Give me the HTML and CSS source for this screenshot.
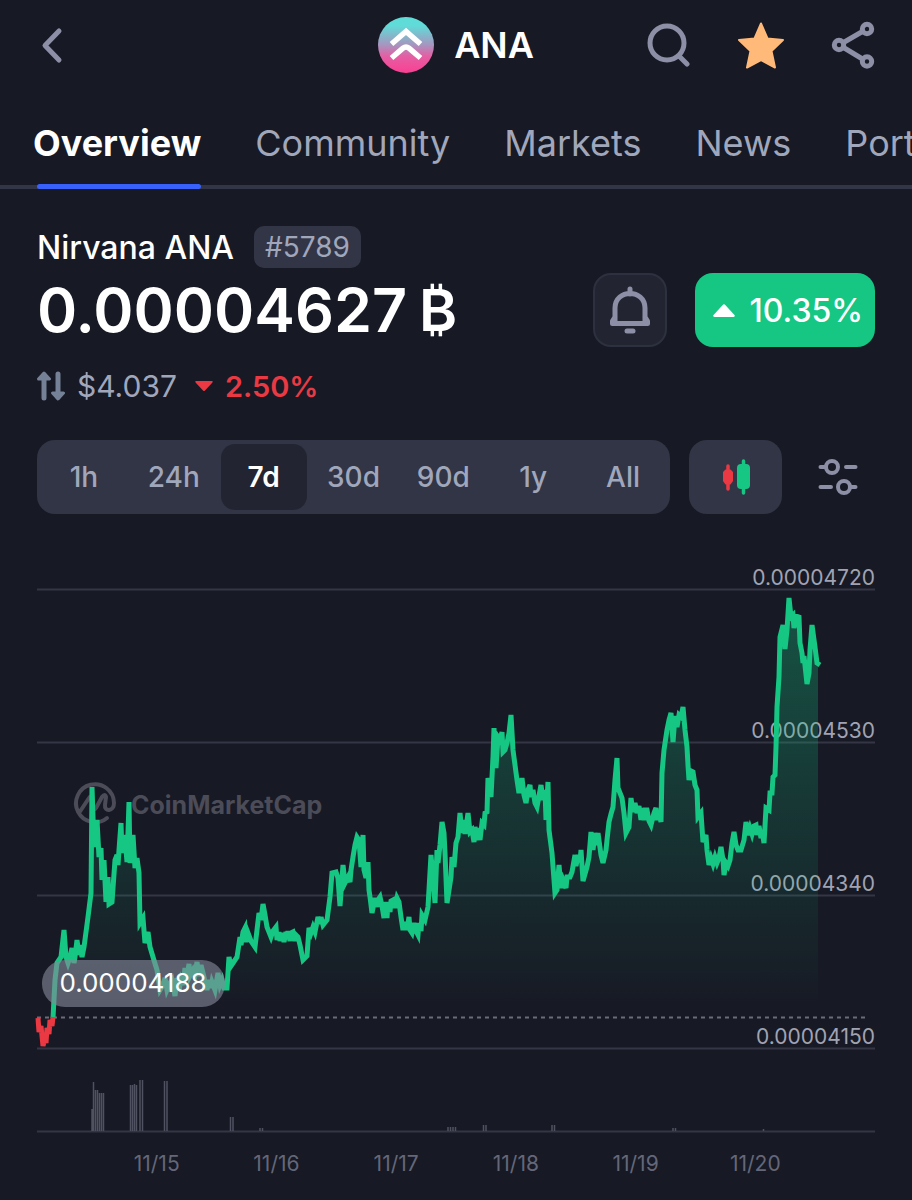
FILE: index.html
```html
<!DOCTYPE html>
<html lang="en">
<head>
    <meta charset="UTF-8">
    <meta name="viewport" content="width=device-width, initial-scale=1.0">
    <title>Nirvana ANA</title>
    <link rel="stylesheet" href="styles.css">
</head>
<body>
    <header class="topbar">
        <button class="icon-btn back" aria-label="Back">
            <svg width="44" height="44" viewBox="0 0 44 44"><path d="M22 8L8 22.500L22 37"/></svg>
        </button>
        <div class="coin">
            <svg width="56" height="56" viewBox="0 0 56 56">
                <defs>
                    <linearGradient id="logoFill" x1="0" y1="0" x2="0" y2="1">
                        <stop offset="0.15" stop-color="#5fdcd8"/>
                        <stop offset="0.5" stop-color="#a795bf"/>
                        <stop offset="0.7" stop-color="#e45fa4"/>
                        <stop offset="1" stop-color="#fb3f92"/>
                    </linearGradient>
                </defs>
                <circle cx="28" cy="28" r="28" fill="url(#logoFill)"/>
                <path d="M13.500 27L28 14.500L42.500 27M13.500 41L25 31.200Q28 28.800 31 31.200L42.500 41" fill="none" stroke="#fff" stroke-width="5.500"/>
            </svg>
            <h1>ANA</h1>
        </div>
        <div class="actions">
            <button class="icon-btn" aria-label="Search">
                <svg width="44" height="44" viewBox="0 0 44 44"><circle cx="20" cy="20" r="17"/><path d="M32 33L40 41"/></svg>
            </button>
            <button class="icon-btn star" aria-label="Watchlist">
                <svg width="48" height="48" viewBox="0 0 48 48"><path d="M24 2.500L30.500 17.500L46 19L34.500 30L38 46.500L24 39L10 46.500L13.500 30L2 19L17.500 17.500Z"/></svg>
            </button>
            <button class="icon-btn" aria-label="Share">
                <svg width="44" height="48" viewBox="0 0 44 48"><circle cx="36" cy="8" r="4.700"/><circle cx="8" cy="24" r="4.700"/><circle cx="36" cy="40.500" r="4.700"/><path d="M12.500 21.500L31.500 10.500M12.500 26.500L31.500 38"/></svg>
            </button>
        </div>
    </header>

    <nav class="tabs">
        <a href="#overview" class="active">Overview</a>
        <a href="#community">Community</a>
        <a href="#markets">Markets</a>
        <a href="#news">News</a>
        <a href="#portfolio">Portfolio</a>
    </nav>

    <main>
        <section class="summary">
            <div>
                <div class="name-row">
                    <h2>Nirvana ANA</h2>
                    <span class="rank">#5789</span>
                </div>
                <div class="price">0.00004627<span class="unit">₿</span></div>
            </div>
            <div class="summary-actions">
                <button class="bell" aria-label="Price alert">
                    <svg width="44" height="48" viewBox="0 0 44 48"><path d="M22 3V8M7 35V22C7 2.500 37 2.500 37 22V35M7 31L4.500 35V37.500H39.500V35L37 31"/><path d="M19 45H25"/></svg>
                </button>
                <div class="change">
                    <svg width="22" height="13" viewBox="0 0 22 13"><path d="M1.500 13Q-1 12.500 1 10.500L9.500 1.200Q11 -.5 12.500 1.200L21 10.500Q23 12.500 20.500 13Z"/></svg>
                    <span>10.35%</span>
                </div>
            </div>
        </section>

        <div class="sub-price">
            <svg width="28" height="30" viewBox="0 0 28 30">
                <path d="M7 27V4M21 3V26" fill="none" stroke="#758196" stroke-width="5" stroke-linecap="round"/>
                <path d="M1.500 8L7 2L12.500 8ZM15.500 22L21 28L26.500 22Z" fill="#758196" stroke="#758196" stroke-width="3" stroke-linejoin="round"/>
            </svg>
            <span class="usd">$4.037</span>
            <svg class="down" width="18" height="10" viewBox="0 0 18 10"><path d="M1 0H17Q18.500 .5 17 2L10 9.500Q9 10.500 8 9.500L1 2Q-.5 .5 1 0Z" fill="#ea3943"/></svg>
            <span class="loss">2.50%</span>
        </div>

        <div class="controls">
            <div class="ranges">
                <button>1h</button>
                <button>24h</button>
                <button class="active">7d</button>
                <button>30d</button>
                <button>90d</button>
                <button>1y</button>
                <button>All</button>
            </div>
            <button class="candles" aria-label="Candlestick chart">
                <svg width="28" height="36" viewBox="0 0 28 36">
                    <path d="M6 7V30" stroke="#ea3943" stroke-width="3.500" stroke-linecap="round"/>
                    <path d="M3.500 10.500H8.500L11 13V22L8.500 25.500H3.500L1 22V13Z" fill="#ea3943"/>
                    <path d="M21.500 2V34" stroke="#16c784" stroke-width="3.500" stroke-linecap="round"/>
                    <rect x="15" y="5" width="13" height="25" rx="4" fill="#16c784"/>
                </svg>
            </button>
            <button class="settings" aria-label="Chart settings">
                <svg width="40" height="36" viewBox="0 0 40 36"><circle cx="14" cy="8" r="6"/><circle cx="26" cy="28" r="6"/><path d="M2.500 8H7M28 8H37.500M2.500 28H13M33 28H37.500"/></svg>
            </button>
        </div>

        <svg class="chart" viewBox="37 560 838 576" role="img" aria-label="ANA price, 7 days">
            <defs>
                <linearGradient id="areaFill" gradientUnits="userSpaceOnUse" x1="0" y1="598" x2="0" y2="1010">
                    <stop offset="0" stop-color="#16c784" stop-opacity="0.34"/>
                    <stop offset="1" stop-color="#16c784" stop-opacity="0"/>
                </linearGradient>
            </defs>

            <!-- watermark -->
            <path class="watermark-logo" d="M107 818A19 19 0 1 1 114 803C114 812 104 812 105 805L106 797Q105 793 102 797L96 808Q94 811 93 807L92 798Q91 795 89 798L79 813"/>
            <text class="watermark" x="131" y="814">CoinMarketCap</text>

            <path class="grid-line" d="M37 589.500H875M37 742.500H875M37 895.500H875M37 1048.500H875M37 1131.500H875"/>
            <path class="base-line" d="M37 1017.500H869"/>

            <g class="axis">
                <text x="875" y="585">0.00004720</text>
                <text x="875" y="738">0.00004530</text>
                <text x="875" y="891">0.00004340</text>
                <text x="875" y="1044">0.00004150</text>
            </g>

            <path id="area" fill="url(#areaFill)"/>
            <path id="line" class="line up" d="M53 1018L55 980L57 963L61 957L64 930L66 957L68 963L70 957L72 948L74 963L75 957L77 940L79 955L80 945L82 957L84 947L88 917L91 893L92 787L94 847L97 820L99 857L101 848L102 880L104 860L106 902L108 877L109 904L112 902L115 860L117 855L118 865L119 850L121 823L122 853L124 835L126 850L127 862L129 802L130 863L133 835L135 868L137 858L139 873L140 923L143 918L145 943L148 932L150 947L153 957L157 970L160 990L163 985L165 978L167 990L170 983L172 980L175 996L177 978L179 990L181 980L183 985L185 968L187 977L189 964L190 976L193 970L195 975L197 962L199 976L201 965L203 973L207 990L209 980L211 988L212 982L215 990L218 973L220 985L222 980L224 988L227 988L229 957L231 966L233 963L237 957L240 937L241 945L243 932L245 928L246 942L248 933L251 941L255 947L259 913L261 920L263 904L265 915L267 927L271 937L273 931L276 927L277 940L279 932L280 941L282 933L284 942L286 932L287 939L288 931L290 941L291 933L293 932L295 941L296 935L298 937L300 945L303 960L307 956L309 928L311 933L313 927L315 932L316 927L318 917L320 924L321 917L323 925L327 920L330 897L332 873L336 872L338 878L340 906L343 865L345 883L348 877L350 882L351 870L353 857L355 845L357 837L359 840L361 867L363 835L364 870L366 878L368 862L369 890L370 897L372 913L375 898L377 907L378 900L380 897L382 906L384 918L385 902L387 918L388 902L390 912L391 901L393 900L395 908L397 898L399 902L401 917L403 930L405 922L407 930L409 917L410 930L412 933L414 923L416 931L418 935L419 923L421 931L422 915L425 920L428 907L431 855L435 903L437 850L438 863L440 845L442 822L444 833L445 853L447 903L449 890L451 877L452 857L454 867L456 843L458 837L460 813L462 833L463 820L465 834L468 813L470 832L472 830L474 842L475 827L477 840L478 828L480 840L482 823L484 825L485 813L487 812L488 778L491 797L493 757L494 728L496 768L498 737L500 740L502 732L503 752L505 750L507 743L509 733L511 715L513 750L517 780L519 793L521 785L522 778L524 795L526 803L528 790L530 785L531 797L533 790L535 803L537 807L539 796L541 785L543 800L545 790L546 820L548 782L549 830L552 853L555 893L557 890L559 865L561 888L563 880L566 888L567 877L570 877L572 872L575 855L576 866L578 855L580 862L581 850L583 881L587 867L589 857L591 832L593 850L595 833L597 845L598 833L601 855L603 863L606 850L607 840L609 822L611 814L613 807L615 780L617 758L618 788L620 793L622 798L624 813L626 833L629 827L631 798L633 812L635 803L637 813L639 806L641 820L642 808L644 820L645 810L647 810L649 821L651 825L654 813L656 808L657 820L659 812L661 822L662 773L664 750L667 730L669 720L671 713L673 742L675 716L677 727L679 715L681 717L683 707L685 730L687 747L688 765L689 780L691 771L693 772L695 785L697 790L698 817L701 813L703 842L706 835L707 850L709 865L711 858L713 864L715 857L717 863L719 858L721 847L723 860L724 875L726 863L728 866L730 860L732 843L734 832L736 845L738 850L741 850L744 840L746 822L748 835L750 828L752 834L754 826L756 825L757 835L759 826L761 838L762 830L764 843L766 808L769 810L770 793L772 793L773 777L775 775L776 747L777 707L779 677L780 637L783 625L785 649L787 630L789 598L791 617L793 615L794 628L796 616L799 617L800 643L802 653L803 663L804 656L807 684L809 673L810 650L812 625L815 647L817 663L820 665"/>
            <path class="line loss-line" d="M38 1018L39 1032L41 1026L43 1046L45 1038L46 1043L47 1028L49 1034L50 1020L52 1026L53 1017"/>

            <rect x="42" y="960" width="183" height="47" rx="23" fill="#858799" fill-opacity="0.62"/>
            <text class="open-price" x="133" y="992">0.00004188</text>

            <!-- volume -->
            <path class="volume" d="M92 1131V1109M93.500 1131V1082M95.500 1131V1090M97.500 1131V1090M99.500 1131V1093M101.500 1131V1093M103.500 1131V1093M130.500 1131V1085M132.500 1131V1085M134.500 1131V1084M136.500 1131V1085M140 1131V1080M142.500 1131V1080M164.500 1131V1081M167 1131V1081M230.500 1131V1117M233 1131V1117M260 1131V1128M262.500 1131V1128M448 1131V1127M450.500 1131V1127M453 1131V1127M455.500 1131V1127M483.500 1131V1125M486 1131V1125M552 1131V1125M554.500 1131V1125M673 1131V1128M675.500 1131V1128M763.500 1131V1129"/>
        </svg>

        <div class="dates">
            <span>11/15</span>
            <span>11/16</span>
            <span>11/17</span>
            <span>11/18</span>
            <span>11/19</span>
            <span>11/20</span>
        </div>
    </main>

    <script>
        // the shaded area follows the price line down to the opening price
        const line = document.getElementById('line').getAttribute('d');
        document.getElementById('area').setAttribute('d', line.replace(/L820 665$/, 'L818 665') + 'V1010H53Z');
    </script>
</body>
</html>
```
FILE: styles.css
```css
* {
    box-sizing: border-box;
}

body {
    margin: 0;
    min-height: 100vh;
    background-color: #171924;
    color: #ffffff;
    font-family: Inter, "Liberation Sans", sans-serif;
}

h1, h2 {
    margin: 0;
}

button {
    padding: 0;
    border: none;
    background: none;
    color: inherit;
    font-family: inherit;
    cursor: pointer;
}

svg {
    display: block;
}

/* header */
.topbar {
    display: grid;
    grid-template-columns: 1fr auto 1fr;
    align-items: center;
    height: 90px;
    padding: 0 37px;
}

.icon-btn {
    display: flex;
    justify-content: center;
    align-items: center;
    width: 44px;
    height: 48px;
}

.icon-btn svg,
.bell svg,
.settings svg {
    flex-shrink: 0;
    fill: none;
    stroke: #8c8fa6;
    stroke-width: 5;
    stroke-linecap: round;
    stroke-linejoin: round;
}

.star svg {
    fill: #ffb978;
    stroke: #ffb978;
    stroke-width: 2;
}

.coin {
    display: flex;
    align-items: center;
    gap: 20px;
}

.coin h1 {
    font-size: 36px;
    font-weight: 600;
}

.actions {
    display: flex;
    justify-content: flex-end;
    gap: 48px;
}

/* tabs */
.tabs {
    display: flex;
    gap: 54px;
    height: 99px;
    padding: 0 33px;
    box-shadow: inset 0 -4px #323546;
    white-space: nowrap;
    overflow: hidden;
}

.tabs a {
    display: flex;
    align-items: center;
    height: 99px;
    padding-top: 7px;
    color: #a1a7bb;
    font-size: 36px;
    text-decoration: none;
}

.tabs .active {
    position: relative;
    color: #ffffff;
    font-weight: 700;
}

.tabs .active::after {
    content: "";
    position: absolute;
    left: 4px;
    right: 0;
    bottom: 0;
    height: 5px;
    border-radius: 3px;
    background-color: #3861fb;
}

/* coin summary */
main {
    padding: 36px 37px 0;
}

.summary {
    display: flex;
    justify-content: space-between;
    align-items: flex-end;
}

.name-row {
    display: flex;
    align-items: center;
    gap: 20px;
    height: 44px;
}

.name-row h2 {
    font-size: 32px;
    font-weight: 500;
}

.rank {
    padding: 0 11px;
    border-radius: 10px;
    background-color: #323546;
    color: #a1a7bb;
    font-size: 28px;
    line-height: 42px;
}

.price {
    display: flex;
    align-items: center;
    gap: 12px;
    height: 82px;
    font-size: 61px;
    font-weight: 600;
}

.unit {
    font-size: 58px;
}

.summary-actions {
    display: flex;
    gap: 28px;
    padding-bottom: 4px;
}

.bell {
    display: flex;
    justify-content: center;
    align-items: center;
    width: 74px;
    height: 74px;
    border: 2px solid #2d303f;
    border-radius: 18px;
    background-color: #222531;
}

.change {
    display: flex;
    justify-content: flex-end;
    align-items: center;
    gap: 14px;
    width: 180px;
    height: 74px;
    padding-right: 12px;
    border-radius: 18px;
    background-color: #16c784;
    font-size: 32px;
    font-weight: 500;
}

.change svg {
    fill: #ffffff;
}

.sub-price {
    display: flex;
    align-items: center;
    gap: 12px;
    height: 40px;
    margin-top: 15px;
    font-size: 30px;
}

.usd {
    color: #a1a7bb;
}

.down {
    margin-left: 6px;
}

.loss {
    color: #ea3943;
    font-size: 29px;
    font-weight: 600;
}

/* range picker */
.controls {
    display: flex;
    gap: 19px;
    height: 74px;
    margin-top: 34px;
}

.ranges {
    display: flex;
    flex: 1;
    gap: 4px;
    padding: 4px;
    border-radius: 18px;
    background-color: #323546;
}

.ranges button {
    flex: 1 1 0;
    border-radius: 14px;
    color: #a1a7bb;
    font-size: 28px;
    font-weight: 500;
}

.ranges .active {
    background-color: #222531;
    color: #ffffff;
    font-weight: 600;
}

.candles,
.settings {
    display: flex;
    justify-content: center;
    align-items: center;
    width: 93px;
    border-radius: 18px;
    background-color: #323546;
}

.settings {
    width: 74px;
    background: none;
}

.settings svg {
    stroke-width: 4;
}

/* chart */
.chart {
    width: 100%;
    margin-top: 46px;
    overflow: visible;
}

.grid-line {
    fill: none;
    stroke: #343646;
    stroke-width: 2;
}

.base-line {
    stroke: #6a6c78;
    stroke-width: 2;
    stroke-dasharray: 4;
}

.line {
    fill: none;
    stroke-width: 5;
}

.up {
    stroke: #16c784;
}

.loss-line {
    stroke: #ea3943;
}

.axis text {
    fill: #a1a3b3;
    font-size: 21px;
    text-anchor: end;
}

.watermark {
    fill: #4b4c58;
    font-size: 25px;
    font-weight: 700;
}

.watermark-logo {
    fill: none;
    stroke: #4b4c58;
    stroke-width: 4;
    stroke-linecap: round;
    stroke-linejoin: round;
}

.open-price {
    fill: #ffffff;
    font-size: 26px;
    text-anchor: middle;
}

.volume {
    stroke: #505261;
    stroke-width: 1.5;
}

.dates {
    display: grid;
    grid-template-columns: repeat(6, 1fr);
    padding: 14px 7.143% 0;
    color: #646778;
    font-size: 21px;
    line-height: 28px;
    text-align: center;
}
```
